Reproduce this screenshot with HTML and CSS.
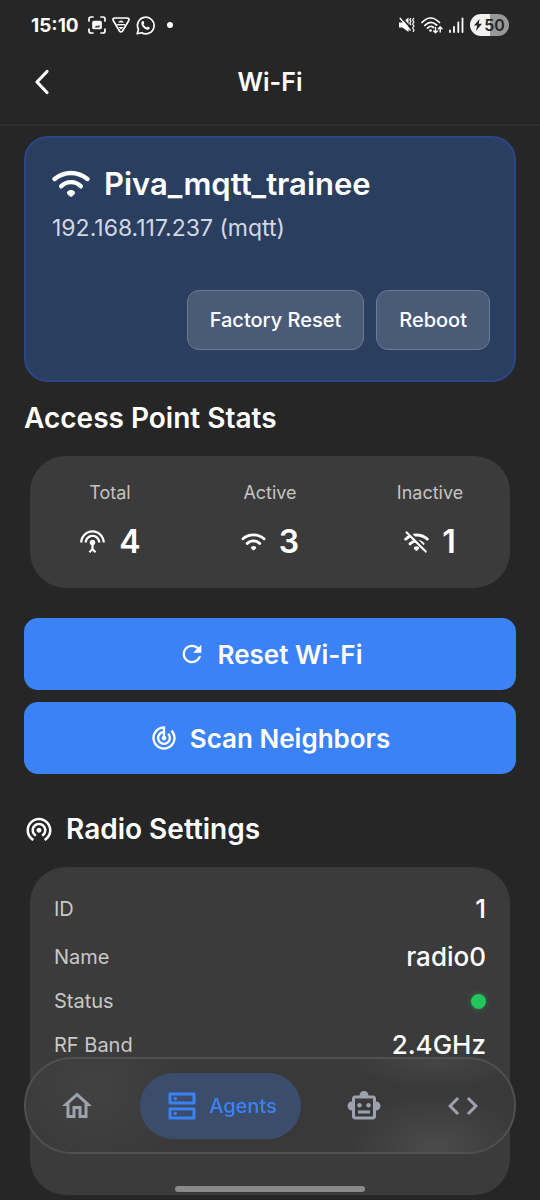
FILE: index.html
```html
<!DOCTYPE html>
<html lang="en">
<head>
<meta charset="utf-8">
<meta name="viewport" content="width=device-width, initial-scale=1">
<title>Wi-Fi</title>
<link rel="stylesheet" href="styles.css">
</head>
<body>
<svg class="defs" aria-hidden="true">
  <symbol id="wifi" viewBox="0 0 38 28">
    <path d="M2.6 9A25.3 25.3 0 0 1 35.4 9M9.2 16.3A13.6 13.6 0 0 1 28.8 16.3" fill="none" stroke="currentColor" stroke-width="4.4" stroke-linecap="round"/>
    <path d="M15.6 21.2Q19 19 22.4 21.2Q24 22.5 22.4 24.2L20.3 26.3Q19 27.4 17.7 26.3L15.6 24.2Q14 22.5 15.6 21.2Z" fill="currentColor"/>
  </symbol>
</svg>
<div class="statusbar">
  <div class="status-left">
    <span class="time">15:10</span>
    <svg width="18" height="18" viewBox="0 0 18 18" fill="none" stroke="#fff" stroke-width="1.7" stroke-linecap="round"><path d="M1 5V3Q1 1 3 1H5M13 1H15Q17 1 17 3V5M17 13V15Q17 17 15 17H13M5 17H3Q1 17 1 15V13"/><rect x="5" y="5.500" width="8" height="7" rx="1" fill="#fff"/><path d="M6.500 11.500L8.500 9.500L9.500 10.500L11.500 8.800V11.500Z" fill="#262626" stroke="none"/></svg>
    <svg width="18" height="18" viewBox="0 0 18 18" fill="none" stroke="#fff" stroke-width="1.7" stroke-linejoin="round"><path d="M3 2H15Q18 2 16.500 5L10.500 15Q9 17 7.500 15L1.500 5Q0 2 3 2Z"/><path d="M6 6.500Q9 2.500 12 6.500ZM6.500 11H11.500L9 13.500Z" stroke="none" fill="#fff"/><path d="M4.800 8.700H13.200" stroke-width="1.400"/></svg>
    <svg width="19" height="19" viewBox="0 0 19 19"><path d="M1.200 17.800L2.500 13.500A8.300 8.300 0 1 1 5.600 16.700Z" fill="none" stroke="#fff" stroke-width="1.700" stroke-linejoin="round"/><path d="M6.600 5Q5.300 5.500 5.300 7.200C5.700 10.500 8.500 13.300 11.700 13.800Q13.600 13.700 14 11.700L11.800 10.500L10.700 11.600Q8.400 10.500 7.400 8.300L8.300 7.200L7.500 5Z" fill="#fff"/></svg>
    <i class="more-dot"></i>
  </div>
  <div class="status-right">
    <svg width="16" height="16" viewBox="0 0 16 16"><path d="M0 5.500H3.500L9.500 0.500V15L3.500 10.500H0Z" fill="#fff"/><path d="M2-0.500L12 11.500" stroke="#262626" stroke-width="1.800"/><path d="M0.800 1L11.500 13.500" stroke="#fff" stroke-width="1.400"/><path d="M12 1L10.800 2.800L12 4.600L10.800 6.400L12 8.200M15 1L13.600 3L15 5L13.600 7L15 9L13.600 11L15 13L14 15" fill="none" stroke="#fff" stroke-width="1.200"/></svg>
    <svg width="22" height="17" viewBox="0 0 22 17" fill="none" stroke="#fff" stroke-width="1.700" stroke-linecap="round"><path d="M1 5.500Q9.500-3.500 18.500 5.500M3.800 8.500Q9.500 2.500 15.600 8M6.500 11.200Q9.500 8 12.500 10.500"/><circle cx="9.500" cy="13.500" r="1.300" fill="#fff" stroke="none"/><path d="M14.500 10.500V15.500M12.700 14L14.500 15.800L16.300 14M19.200 15V10M17.400 11.700L19.200 9.800L21 11.700" stroke-width="1.400"/></svg>
    <svg width="15" height="16" viewBox="0 0 15 16" stroke="#fff" stroke-width="1.800" stroke-linecap="round"><path d="M1 13.500V15M5 10V15M9.300 5.500V15M13.500 1.500V15"/></svg>
    <span class="battery"><svg width="8" height="12" viewBox="0 0 8 12"><path d="M5.500 0L0 6.500H3.200L2 12L8 4.800H4.700Z" fill="#262626"/></svg>50</span>
  </div>
</div>
<header class="appbar">
  <button class="back" aria-label="Back"><svg width="16" height="26" viewBox="0 0 16 26"><path d="M13 2.500L3 13L13 23.500" fill="none" stroke="#fff" stroke-width="3.200" stroke-linecap="round" stroke-linejoin="round"/></svg></button>
  <h1>Wi-Fi</h1>
</header>
<main>
  <section class="device">
    <h2><svg width="38" height="28" aria-hidden="true"><use href="#wifi"/></svg>Piva_mqtt_trainee</h2>
    <p>192.168.117.237 (mqtt)</p>
    <div class="device-actions">
      <button>Factory Reset</button>
      <button>Reboot</button>
    </div>
  </section>
  <h2 class="section-title">Access Point Stats</h2>
  <dl class="stats">
    <div><dt>Total</dt><dd><svg width="27" height="27" viewBox="0 0 24 24" fill="currentColor"><path d="M12 5c-3.870 0-7 3.130-7 7h2c0-2.760 2.240-5 5-5s5 2.240 5 5h2c0-3.870-3.130-7-7-7zm1 9.290c.880-.390 1.500-1.260 1.500-2.290 0-1.380-1.120-2.500-2.500-2.500S9.500 10.620 9.500 12c0 1.020.620 1.900 1.500 2.290v3.300L8.590 20 10 21.410l2-2 2 2L15.410 20 13 17.590v-3.300zM12 1C5.930 1 1 5.930 1 12h2c0-4.970 4.030-9 9-9s9 4.030 9 9h2c0-6.070-4.930-11-11-11z"/></svg>4</dd></div>
    <div><dt>Active</dt><dd><svg width="25" height="18"><use href="#wifi"/></svg>3</dd></div>
    <div><dt>Inactive</dt><dd><svg width="25" height="22" viewBox="0 0 38 33"><defs><mask id="cut"><rect width="38" height="33" fill="#fff"/><path d="M5-3L41 33" stroke="#000" stroke-width="5"/></mask></defs><use href="#wifi" y="3" width="38" height="28" mask="url(#cut)"/><path d="M4 2L33 31" stroke="currentColor" stroke-width="3.400" stroke-linecap="round"/></svg>1</dd></div>
  </dl>
  <div class="actions">
    <button><svg width="28" height="28" viewBox="0 0 24 24" fill="currentColor"><path d="M17.650 6.350C16.200 4.900 14.210 4 12 4c-4.420 0-7.990 3.580-7.990 8s3.570 8 7.990 8c3.730 0 6.840-2.550 7.730-6h-2.080c-.820 2.330-3.040 4-5.650 4-3.310 0-6-2.690-6-6s2.690-6 6-6c1.660 0 3.140.690 4.220 1.780L13 11h7V4l-2.350 2.350z"/></svg>Reset Wi-Fi</button>
    <button><svg width="28" height="28" viewBox="0 0 24 24" fill="currentColor"><path d="M19.070 4.930l-1.410 1.410C19.100 7.790 20 9.790 20 12c0 4.420-3.580 8-8 8s-8-3.580-8-8c0-4.080 3.050-7.440 7-7.930v2.020C8.160 6.570 6 9.030 6 12c0 3.310 2.690 6 6 6s6-2.690 6-6c0-1.660-.670-3.160-1.760-4.240l-1.410 1.410C15.550 9.900 16 10.900 16 12c0 2.210-1.790 4-4 4s-4-1.790-4-4c0-1.860 1.280-3.410 3-3.860v2.140c-.600.350-1 .980-1 1.720 0 1.100.900 2 2 2s2-.900 2-2c0-.740-.400-1.380-1-1.720V2h-1C6.480 2 2 6.480 2 12s4.480 10 10 10 10-4.480 10-10c0-2.760-1.120-5.260-2.930-7.070z"/></svg>Scan Neighbors</button>
  </div>
  <h2 class="section-title radio-title"><svg width="30" height="30" viewBox="0 0 24 24" fill="currentColor"><path d="M12 11c-1.100 0-2 .900-2 2s.900 2 2 2 2-.900 2-2-.900-2-2-2zm6 2c0-3.310-2.690-6-6-6s-6 2.690-6 6c0 2.220 1.210 4.150 3 5.190l1-1.740c-1.190-.700-2-1.970-2-3.450 0-2.210 1.790-4 4-4s4 1.790 4 4c0 1.480-.810 2.750-2 3.450l1 1.740c1.790-1.040 3-2.970 3-5.190zM12 3C6.480 3 2 7.480 2 13c0 3.700 2.010 6.920 4.990 8.650l1-1.730C5.610 18.530 4 15.960 4 13c0-4.420 3.580-8 8-8s8 3.580 8 8c0 2.960-1.610 5.530-4 6.920l1 1.730c2.990-1.730 5-4.950 5-8.650 0-5.520-4.480-10-10-10z"/></svg>Radio Settings</h2>
  <dl class="radio">
    <div><dt>ID</dt><dd>1</dd></div>
    <div><dt>Name</dt><dd>radio0</dd></div>
    <div><dt>Status</dt><dd class="online" role="img" aria-label="Online"></dd></div>
    <div><dt>RF Band</dt><dd>2.4GHz</dd></div>
  </dl>
</main>
<nav class="tabs">
  <a href="#home" aria-label="Home"><svg width="36" height="36" viewBox="0 0 24 24" fill="currentColor"><path d="M12 5.690l5 4.500V18h-2v-6H9v6H7v-7.810l5-4.500M12 3L2 12h3v8h6v-6h2v6h6v-8h3L12 3z"/></svg></a>
  <a href="#agents" class="active" aria-current="page"><svg width="36" height="36" viewBox="0 0 24 24" fill="currentColor"><path d="M19 15v4H5v-4h14m1-2H4c-.550 0-1 .450-1 1v6c0 .550.450 1 1 1h16c.550 0 1-.450 1-1v-6c0-.550-.450-1-1-1zM19 5v4H5V5h14m1-2H4c-.550 0-1 .450-1 1v6c0 .550.450 1 1 1h16c.550 0 1-.450 1-1V4c0-.550-.450-1-1-1z"/><circle cx="7.500" cy="7" r="1.200"/><circle cx="7.500" cy="17" r="1.200"/></svg>Agents</a>
  <a href="#assistant" aria-label="Assistant"><svg width="36" height="36" viewBox="0 0 24 24" fill="currentColor"><path d="M20 9V7c0-1.100-.900-2-2-2h-3c0-1.660-1.340-3-3-3S9 3.340 9 5H6c-1.100 0-2 .900-2 2v2c-1.660 0-3 1.340-3 3s1.340 3 3 3v4c0 1.100.900 2 2 2h12c1.100 0 2-.900 2-2v-4c1.660 0 3-1.340 3-3s-1.340-3-3-3zm-2 10H6V7h12v12zm-9-6c-.830 0-1.500-.670-1.500-1.500S8.170 10 9 10s1.500.670 1.500 1.500S9.830 13 9 13zm7.500-1.500c0 .830-.670 1.500-1.500 1.500s-1.500-.670-1.500-1.500.670-1.500 1.500-1.500 1.500.670 1.500 1.500zM8 15h8v2H8v-2z"/></svg></a>
  <a href="#code" aria-label="Code"><svg width="36" height="36" viewBox="0 0 24 24" fill="currentColor"><path d="M9.400 16.600L4.800 12l4.600-4.600L8 6l-6 6 6 6 1.400-1.400zm5.200 0l4.600-4.600-4.600-4.600L16 6l6 6-6 6-1.400-1.400z"/></svg></a>
</nav>
<div class="home-indicator"></div>
</body>
</html>
```
FILE: styles.css
```css
* { box-sizing: border-box; }
body {
  margin: 0;
  min-height: 100vh;
  background: #262626;
  color: #fff;
  font-family: Inter, "Liberation Sans", sans-serif;
}
h1, h2, p, dl, dd { margin: 0; }
button { font: inherit; color: inherit; border: 0; cursor: pointer; }
svg { display: block; flex: none; }
.defs { position: absolute; width: 0; height: 0; }

.statusbar {
  display: flex;
  justify-content: space-between;
  align-items: center;
  height: 50px;
  padding: 0 31px;
}
.status-left, .status-right { display: flex; align-items: center; }
.status-left { gap: 6px; }
.status-right { gap: 6px; }
.time { font-size: 19px; font-weight: 700; margin-right: 3px; }
.more-dot { width: 6px; height: 6px; border-radius: 50%; background: #fff; margin-left: 6px; }
.battery {
  display: flex;
  align-items: center;
  justify-content: center;
  gap: 2px;
  width: 39px;
  height: 22px;
  border-radius: 11px;
  background: linear-gradient(90deg, #f2f2f2 50%, #999 50%);
  color: #262626;
  font-size: 16px;
  font-weight: 600;
}

.appbar {
  display: grid;
  grid-template-columns: 48px 1fr 48px;
  align-items: center;
  height: 76px;
  padding: 0 18px 10px;
  border-bottom: 2px solid #2e2e2e;
}
.appbar h1 { font-size: 25px; font-weight: 600; text-align: center; }
.back { display: grid; place-items: center; height: 48px; padding: 0; background: none; }

main { padding: 10px 24px 5px; }
.device {
  padding: 28px 24px 30px 26px;
  border: 2px solid #2c4788;
  border-radius: 24px;
  background: #2a3e60;
}
.device h2 {
  display: flex;
  align-items: center;
  gap: 14px;
  font-size: 31px;
  font-weight: 600;
  line-height: 36px;
}
.device p { margin-top: 12px; font-size: 23px; line-height: 28px; color: #d3d9e4; }
.device-actions { display: flex; justify-content: flex-end; gap: 12px; margin-top: 48px; }
.device-actions button {
  height: 60px;
  padding: 0 22px;
  border: 1px solid #6b7b95;
  border-radius: 12px;
  background: #4a5b78;
  font-size: 20px;
  font-weight: 500;
}

.section-title {
  display: flex;
  align-items: center;
  gap: 12px;
  margin: 18px 0 20px;
  font-size: 28px;
  font-weight: 600;
  line-height: 36px;
}
.stats {
  display: grid;
  grid-template-columns: repeat(3, 1fr);
  margin: 0 6px;
  padding: 24px 0;
  border-radius: 36px;
  background: #3b3b3b;
}
.stats dt { font-size: 18px; line-height: 26px; text-align: center; color: #c4c4c4; }
.stats dd {
  display: flex;
  align-items: center;
  justify-content: center;
  gap: 13px;
  margin-top: 14px;
  font-size: 32px;
  font-weight: 600;
  line-height: 44px;
}

.actions { display: grid; gap: 12px; margin-top: 30px; }
.actions button {
  display: flex;
  align-items: center;
  justify-content: center;
  gap: 12px;
  height: 72px;
  border-radius: 14px;
  background: #3b82f6;
  font-size: 26px;
  font-weight: 600;
}

.radio-title { margin-top: 37px; }
.radio {
  display: grid;
  gap: 16px;
  margin: 0 6px;
  padding: 26px 24px 134px;
  border-radius: 36px;
  background: #3b3b3b;
}
.radio div { display: flex; align-items: center; justify-content: space-between; }
.radio dt { font-size: 20px; line-height: 24px; color: #c8c8c8; }
.radio dd { font-size: 26px; font-weight: 500; line-height: 32px; }
.radio .online {
  width: 15px;
  height: 15px;
  border-radius: 50%;
  background: #22c55e;
  box-shadow: 0 0 6px #22c55e66;
}

.tabs {
  position: fixed;
  left: 24px;
  right: 24px;
  bottom: 46px;
  display: flex;
  align-items: center;
  justify-content: space-between;
  height: 97px;
  padding: 0 15px;
  border: 2px solid #505050;
  border-radius: 49px;
  background:
    radial-gradient(ellipse 90px 56px at 84% 96%, #4b4b4b, #4b4b4b00),
    radial-gradient(ellipse 90px 30px at 84% 0%, #464646, #46464600),
    radial-gradient(ellipse 100px 90px at 14% 30%, #424242, #42424200),
    #393939;
}
.tabs a {
  display: flex;
  align-items: center;
  justify-content: center;
  gap: 9px;
  min-width: 72px;
  height: 66px;
  border-radius: 33px;
  color: #9ca3af;
  text-decoration: none;
}
.tabs .active {
  padding: 0 24px;
  background: #3c4d6c;
  color: #3b82f6;
  font-size: 20px;
  font-weight: 500;
}
.home-indicator {
  position: fixed;
  left: 50%;
  bottom: 8px;
  width: 190px;
  height: 6px;
  margin-left: -95px;
  border-radius: 3px;
  background: #8a8a8a;
}
```
